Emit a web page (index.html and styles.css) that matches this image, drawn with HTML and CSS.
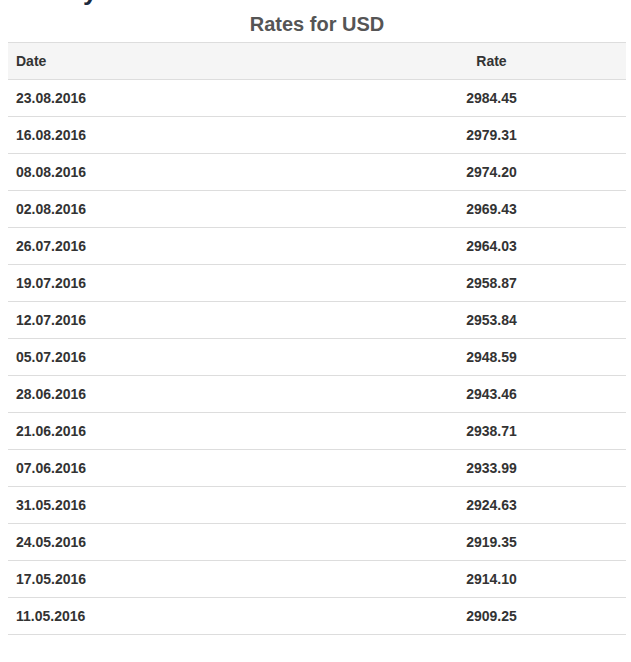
FILE: index.html
```html
<!DOCTYPE html>
<html>
<head>
<meta charset="utf-8">
<link rel="stylesheet" href="styles.css">
</head>
<body>
<div class="page">
  <div class="clip"><h1 class="prev-heading">History</h1></div>
  <h2 class="title">Rates for USD</h2>
  <table class="rates">
    <thead>
      <tr><th class="col-date">Date</th><th class="col-rate">Rate</th></tr>
    </thead>
    <tbody>
      <tr><td>23.08.2016</td><td class="num">2984.45</td></tr>
      <tr><td>16.08.2016</td><td class="num">2979.31</td></tr>
      <tr><td>08.08.2016</td><td class="num">2974.20</td></tr>
      <tr><td>02.08.2016</td><td class="num">2969.43</td></tr>
      <tr><td>26.07.2016</td><td class="num">2964.03</td></tr>
      <tr><td>19.07.2016</td><td class="num">2958.87</td></tr>
      <tr><td>12.07.2016</td><td class="num">2953.84</td></tr>
      <tr><td>05.07.2016</td><td class="num">2948.59</td></tr>
      <tr><td>28.06.2016</td><td class="num">2943.46</td></tr>
      <tr><td>21.06.2016</td><td class="num">2938.71</td></tr>
      <tr><td>07.06.2016</td><td class="num">2933.99</td></tr>
      <tr><td>31.05.2016</td><td class="num">2924.63</td></tr>
      <tr><td>24.05.2016</td><td class="num">2919.35</td></tr>
      <tr><td>17.05.2016</td><td class="num">2914.10</td></tr>
      <tr><td>11.05.2016</td><td class="num">2909.25</td></tr>
    </tbody>
  </table>
</div>
</body>
</html>
```
FILE: styles.css
```css
html, body {
  margin: 0;
  padding: 0;
  background: #fff;
}
body {
  font-family: "Liberation Sans", Arial, sans-serif;
  color: #333;
}
.page {
  width: 618px;
  padding: 0 8px;
}
.clip {
  height: 5px;
  overflow: hidden;
}
.prev-heading {
  margin: -24px 0 0 0;
  font-size: 26px;
  line-height: 30px;
  font-weight: bold;
  color: #1c2a3e;
}
.title {
  margin: 7px 0 0 0;
  font-size: 20px;
  line-height: 24px;
  font-weight: bold;
  color: #555;
  text-align: center;
  height: 30px;
}
.rates {
  width: 618px;
  border-collapse: collapse;
  border-spacing: 0;
  font-size: 14px;
  line-height: 20px;
  font-weight: bold;
}
.rates th,
.rates td {
  padding: 8px;
  border-top: 1px solid #ddd;
  text-align: left;
  height: 20px;
}
.rates thead th {
  background: #f5f5f5;
}
.rates tbody tr:last-child td {
  border-bottom: 1px solid #ddd;
}
.col-date {
  width: 333px;
}
.rates th.col-rate,
.rates td.num {
  text-align: center;
}
```
